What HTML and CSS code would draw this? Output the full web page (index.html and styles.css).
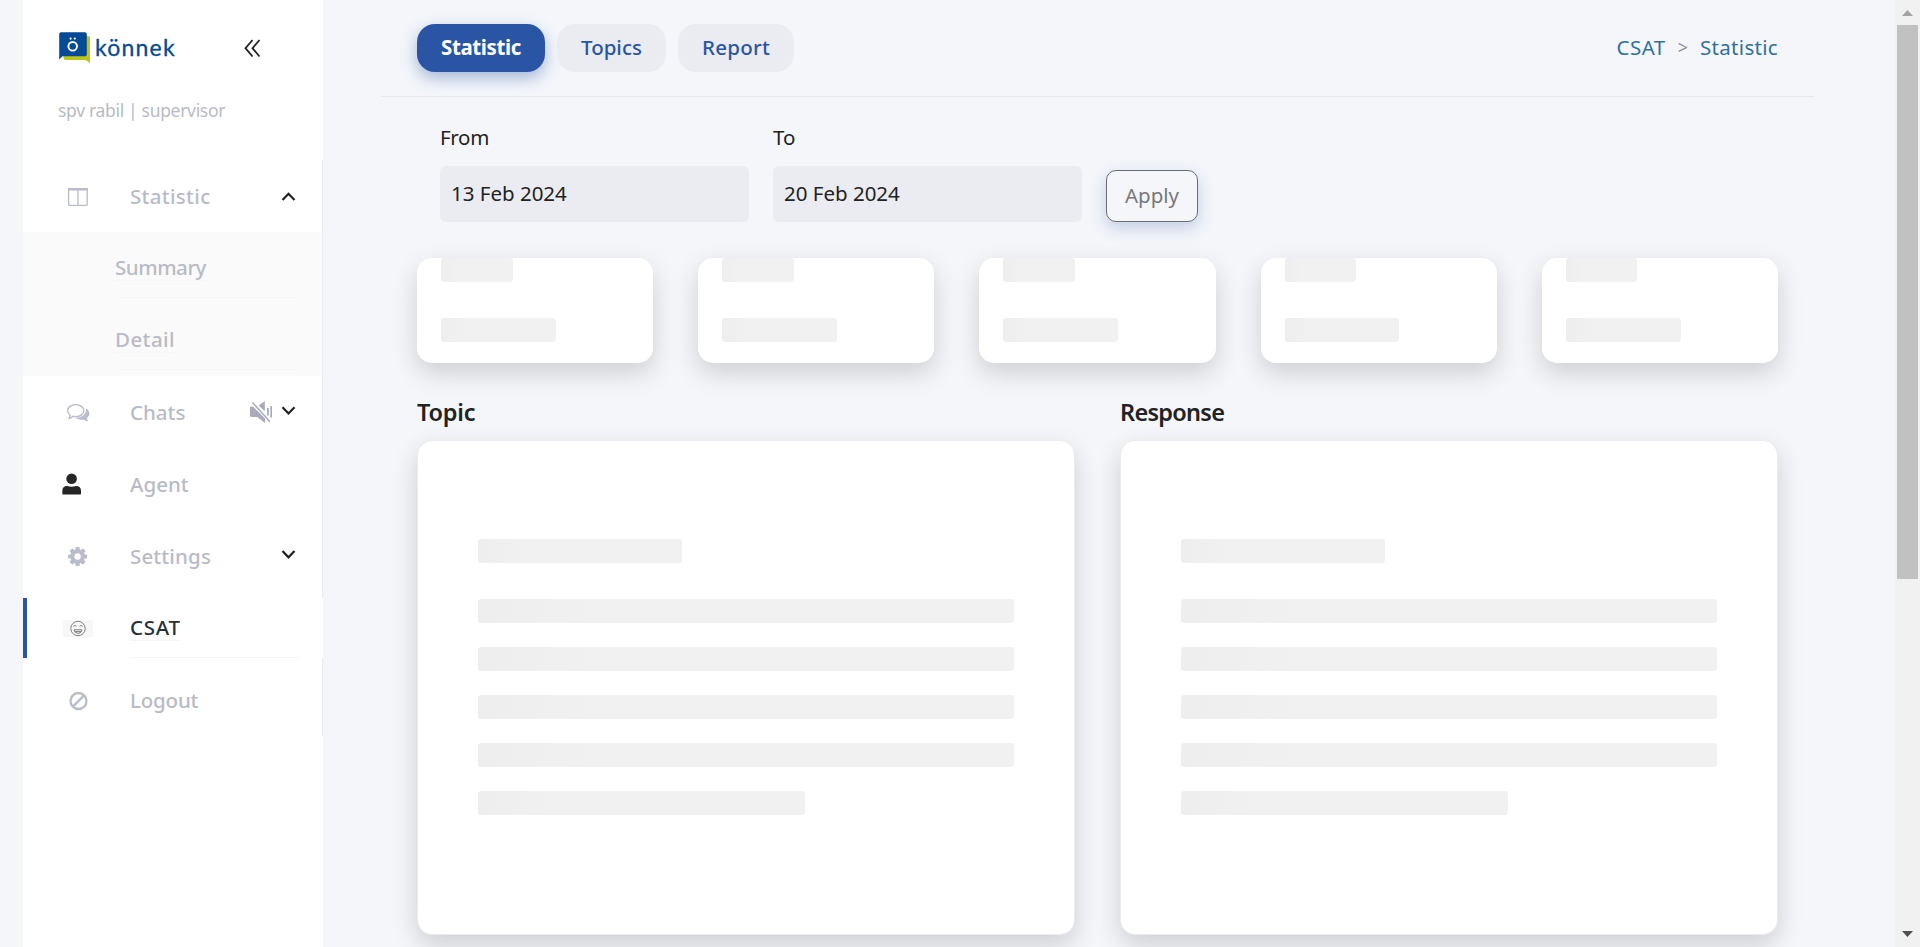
FILE: index.html
```html
<!DOCTYPE html>
<html lang="en">
<head>
<meta charset="utf-8">
<title>CSAT - Statistic</title>
<link rel="stylesheet" href="styles.css">
</head>
<body>
<aside class="sidebar">
  <div class="brand">
    <svg class="logo" width="32" height="31" viewBox="0 0 32 31">
      <path d="M7 4H29a2 2 0 0 1 2 2V31L26.500 28H6.500a2 2 0 0 1-2-2V6z" fill="#bcc41c"/>
      <path d="M2 .3H26a1.800 1.800 0 0 1 1.800 1.800V22.500a1.800 1.800 0 0 1-1.800 1.800H3.500L.2 27.500V2.100A1.800 1.800 0 0 1 2 .3z" fill="#054a97"/>
      <circle cx="13.700" cy="14.300" r="4.300" fill="none" stroke="#fff" stroke-width="1.900"/>
      <circle cx="11.600" cy="6.600" r="1.100" fill="#fff"/><circle cx="15.800" cy="6.600" r="1.100" fill="#fff"/>
    </svg>
    <span class="brand-name">könnek</span>
    <svg class="collapse" width="18" height="19" viewBox="0 0 18 19"><path d="M8.500 1L1.500 9.200L8.500 17.500M15.500 1L8.500 9.200L15.500 17.500" fill="none" stroke="#222" stroke-width="1.800"/></svg>
  </div>
  <p class="user">spv rabil | supervisor</p>
  <nav class="menu">
    <a class="item">
      <svg class="icon" viewBox="0 0 40 40"><rect x="10.600" y="12.800" width="18.600" height="16.600" rx="1.200" fill="none" stroke="#b9bcca" stroke-width="1.300"/><path d="M10 12h20v2.400H10zM19.300 13h1.300v16h-1.300z" fill="#b9bcca"/></svg>
      <span class="label label-statistic">Statistic</span>
      <svg class="tools" viewBox="0 0 70 40"><path d="M42.500 24L48.500 17.800L54.500 24" fill="none" stroke="#222" stroke-width="2.200"/></svg>
    </a>
    <div class="submenu">
      <a class="subitem"><span class="sublabel label-summary">Summary</span></a>
      <a class="subitem"><span class="sublabel label-detail">Detail</span></a>
    </div>
    <a class="item">
      <svg class="icon" viewBox="0 0 40 40"><path d="M17.700 12.600C22.300 12.600 25.900 15.200 25.900 18.600S22.300 24.600 17.700 24.600Q16.200 24.600 15 24.300Q13.500 26 11.200 26.300L12.200 23.100C10.500 22 9.600 20.400 9.600 18.600C9.600 15.200 13.200 12.600 17.700 12.600z" fill="none" stroke="#b9bcca" stroke-width="1.400"/><path d="M28 16.200C30.200 17.500 31.400 19.500 31.400 21.500C31.400 23.300 30.300 24.700 29 25.800Q29 27.800 30.200 29Q27 29 25.400 27.400C22.500 28 19 27.400 17 25.800C23.500 25.700 28.800 22.500 28 16.200z" fill="#b9bcca"/></svg>
      <span class="label label-chats">Chats</span>
      <svg class="tools" viewBox="0 0 70 40"><g fill="#a8abbb"><path d="M10 14.800H13.200L25 26.500V31L17.300 25H11.500A1.500 1.500 0 0 1 10 23.500z"/><path d="M18.600 13.500L24.800 9V19.200z"/><path d="M27 16h1.800v7.500H27zM30.300 14h1.700v11.500h-1.700z"/></g><path d="M12.600 10L30 29.500" stroke="#fff" stroke-width="2.600"/><path d="M12.300 10.300L30 29.700" stroke="#a8abbb" stroke-width="1.500"/><path d="M42.500 15.300L48.500 21.500L54.500 15.300" fill="none" stroke="#222" stroke-width="2.200"/></svg>
    </a>
    <a class="item">
      <svg class="icon" viewBox="0 0 40 40"><circle cx="13.600" cy="14.800" r="5.300" fill="#262626"/><path d="M4.300 30V27Q4.300 22 9.300 22Q13.600 23.500 18 22Q23 22 23 27V30L22.400 30.600H5z" fill="#262626"/></svg>
      <span class="label label-agent">Agent</span>
    </a>
    <a class="item">
      <svg class="icon" viewBox="0 0 40 40"><g fill="#b9bcca"><rect x="17.500" y="11" width="4.200" height="19" rx=".8"/><rect x="17.500" y="11" width="4.200" height="19" rx=".8" transform="rotate(45 19.600 20.500)"/><rect x="17.500" y="11" width="4.200" height="19" rx=".8" transform="rotate(90 19.600 20.500)"/><rect x="17.500" y="11" width="4.200" height="19" rx=".8" transform="rotate(135 19.600 20.500)"/><circle cx="19.600" cy="20.500" r="7.300"/></g><circle cx="19.600" cy="20.500" r="3.200" fill="#fff"/></svg>
      <span class="label label-settings">Settings</span>
      <svg class="tools" viewBox="0 0 70 40"><path d="M42.500 15.100L48.500 21.300L54.500 15.100" fill="none" stroke="#222" stroke-width="2.200"/></svg>
    </a>
    <a class="item active">
      <svg class="icon" viewBox="0 0 40 40"><rect x="5" y="12" width="30" height="17" fill="#f7f7f7"/><g fill="none" stroke="#808080" stroke-width="1"><circle cx="20" cy="20.500" r="7.200"/><path d="M15.300 18.300q1.600-1.700 3.200 0M21.500 18.300q1.600-1.700 3.200 0"/><path d="M16 21.800H24Q23.600 25.400 20 25.400T16 21.800zM17 23.600H23"/></g></svg>
      <span class="link-body"><span class="label label-csat">CSAT</span></span>
    </a>
    <a class="item">
      <svg class="icon" viewBox="0 0 40 40"><g fill="none" stroke="#b9bcca" stroke-width="2.300"><circle cx="20.500" cy="21" r="8"/><path d="M14.900 26.600L26.100 15.400"/></g></svg>
      <span class="label label-logout">Logout</span>
    </a>
  </nav>
</aside>
<main class="main">
  <header class="header">
    <div class="tabs">
      <a class="tab tab-active">Statistic</a>
      <a class="tab tab-topics">Topics</a>
      <a class="tab tab-report">Report</a>
    </div>
    <div class="crumbs"><span class="crumb-root">CSAT</span><span class="crumb-sep">&gt;</span><span class="crumb-leaf">Statistic</span></div>
  </header>
  <div class="content">
    <form class="filters">
      <div class="field"><span class="field-name name-from">From</span><div class="date">13 Feb 2024</div></div>
      <div class="field"><span class="field-name">To</span><div class="date">20 Feb 2024</div></div>
      <div class="apply">Apply</div>
    </form>
    <section class="cards">
      <div class="card"><i class="bone bone-title"></i><i class="bone bone-last"></i></div>
      <div class="card"><i class="bone bone-title"></i><i class="bone bone-last"></i></div>
      <div class="card"><i class="bone bone-title"></i><i class="bone bone-last"></i></div>
      <div class="card"><i class="bone bone-title"></i><i class="bone bone-last"></i></div>
      <div class="card"><i class="bone bone-title"></i><i class="bone bone-last"></i></div>
    </section>
    <section class="panels">
      <div class="panel">
        <h2 class="panel-name name-topic">Topic</h2>
        <div class="panel-card"><i class="bone bone-title"></i><i class="bone"></i><i class="bone"></i><i class="bone"></i><i class="bone"></i><i class="bone bone-last"></i></div>
      </div>
      <div class="panel">
        <h2 class="panel-name name-response">Response</h2>
        <div class="panel-card"><i class="bone bone-title"></i><i class="bone"></i><i class="bone"></i><i class="bone"></i><i class="bone"></i><i class="bone bone-last"></i></div>
      </div>
    </section>
  </div>
</main>
<div class="scrollbar">
  <svg width="25" height="25" viewBox="0 0 25 25"><path d="M7 16L12.500 10L18 16z" fill="#a3a3a3"/></svg>
  <div class="thumb"></div>
  <svg width="25" height="25" viewBox="0 0 25 25"><path d="M7 9L12.500 15L18 9z" fill="#505050"/></svg>
</div>
</body>
</html>
```

FILE: styles.css
```css
* { box-sizing: border-box; }
body {
  margin: 0;
  height: 947px;
  overflow: hidden;
  display: flex;
  background: #f4f6fa;
  color: #222;
  font: 400 20.5px/28px "Noto Sans", sans-serif;
}

/* Sidebar */
.sidebar { width: 300px; margin-left: 23px; background: #fff; flex: none; }
.brand { height: 96px; padding: 32px 0 0 36px; display: flex; align-items: flex-start; }
.logo { flex: none; }
.brand-name {
  margin-left: 4px;
  width: 81px;
  font: 400 23px/30px Lato, sans-serif;
  letter-spacing: 1.2px;
  color: #054a97;
  -webkit-text-stroke: 0.3px #054a97;
}
.collapse { margin: 7px 0 0 68px; }
.user {
  margin: 0;
  height: 64px;
  padding: 0 0 0 35px;
  font-size: 17.5px;
  letter-spacing: -0.32px;
  color: #b8bbc6;
}
.menu { display: flex; flex-direction: column; border-right: 1px solid #ececf1; }
.item { height: 72px; padding: 0 12px 0 35px; display: flex; align-items: center; color: #b8bbc6; font-weight: 500; }
.icon { width: 40px; height: 40px; margin-right: 32px; flex: none; }
.tools { width: 70px; height: 40px; margin-left: auto; }
.submenu { background: #fafafa; }
.subitem {
  height: 72px;
  padding: 22px 0 0;
  display: flex;
  align-items: flex-start;
  color: #b8bbc6;
  font-weight: 500;
  background: linear-gradient(#f6f6f6, #f6f6f6) 93px 65px / 183px 1px no-repeat;
}
.sublabel { margin-left: 92px; border-bottom: 1px solid #f6f6f6; line-height: 26px; }
.active {
  height: 60px;
  margin: 6px -1px 6px 0;
  padding: 0 24px 0 31px;
  background: #fff;
  border-left: 4px solid #2a55a5;
  color: #263238;
}
.link-body { flex: 1; height: 60px; padding-top: 15px; border-bottom: 1px solid #f5f5f5; }
.label-csat { display: inline-block; line-height: 26px; letter-spacing: 0.7px; border-bottom: 1px solid #f5f5f5; }
.label-statistic { letter-spacing: 0.32px; }
.label-summary { letter-spacing: -0.46px; }
.label-detail { letter-spacing: 0.43px; }
.label-settings { letter-spacing: 0.15px; }
.label-logout { letter-spacing: -0.2px; }

/* Header */
.main { width: 1433px; margin-left: 58px; flex: none; }
.header {
  height: 97px;
  padding: 24px 36px 0;
  display: flex;
  justify-content: space-between;
  border-bottom: 1px solid #e6e7ec;
}
.tabs { display: flex; gap: 12px; }
.tab {
  height: 48px;
  width: 128px;
  border-radius: 18px;
  background: #ebecf1;
  color: #2a55a5;
  font-weight: 500;
  line-height: 47px;
  text-align: center;
}
.tab-active {
  background: #2a55a5;
  color: #fff;
  font-weight: 700;
  letter-spacing: -0.38px;
  box-shadow: 0 6px 16px rgba(42, 85, 165, 0.4);
}
.tab-topics { width: 109px; }
.tab-report { width: 116px; letter-spacing: 0.25px; }
.crumbs { display: flex; align-items: center; height: 46px; color: #31709c; }
.crumb-root { letter-spacing: 0.5px; }
.crumb-sep { margin: 0 12px; font-size: 18px; color: #8b8d94; }
.crumb-leaf { letter-spacing: 0.31px; }

/* Filters */
.content { padding: 26px 36px 0; }
.filters { display: flex; gap: 24px; padding-left: 23px; height: 99px; margin-bottom: 36px; }
.field { width: 309px; }
.field-name { display: block; height: 43px; }
.name-from { letter-spacing: -0.32px; }
.date { height: 56px; padding-left: 11px; border-radius: 6px; background: #ebecf1; line-height: 54px; }
.apply {
  width: 92px;
  height: 52px;
  margin-top: 47px;
  border: 1px solid #6c6d71;
  border-radius: 10px;
  color: #77787c;
  line-height: 49px;
  text-align: center;
  box-shadow: 0 6px 16px rgba(42, 85, 165, 0.25);
  background: #f4f6fa;
}

/* Cards and loading placeholders */
.cards { display: grid; grid-template-columns: repeat(5, 1fr); gap: 45px; }
.card {
  height: 105px;
  padding: 0 24px;
  border-radius: 15px;
  background: #fff;
  box-shadow: 0 10px 26px rgba(0, 0, 0, 0.16);
}
.bone {
  display: block;
  height: 24px;
  margin-bottom: 24px;
  border-radius: 3px;
  background: linear-gradient(90deg, #eee, #f1f1f1 25%, #f1f1f1);
}
.bone-title { width: 38%; margin-bottom: 36px; }
.bone-last { width: 61%; }
.panels { display: grid; grid-template-columns: 1fr 1fr; gap: 45px; }
.panel-name { margin: 0; height: 77px; padding-top: 32px; font-size: 23.5px; font-weight: 600; line-height: 34px; }
.name-topic { letter-spacing: -0.2px; }
.name-response { letter-spacing: -0.72px; }
.panel-card {
  height: 495px;
  padding: 98px 60px 0;
  border: 1px solid #ececee;
  border-radius: 15px;
  background: #fff;
  box-shadow: 0 10px 26px rgba(0, 0, 0, 0.16);
}

/* Scrollbar */
.scrollbar { width: 25px; height: 947px; margin-left: auto; background: #f1f1f1; display: flex; flex-direction: column; flex: none; }
.scrollbar svg { flex: none; }
.thumb { width: 21px; height: 554px; margin: 0 2px auto; background: #c1c1c1; }
```
